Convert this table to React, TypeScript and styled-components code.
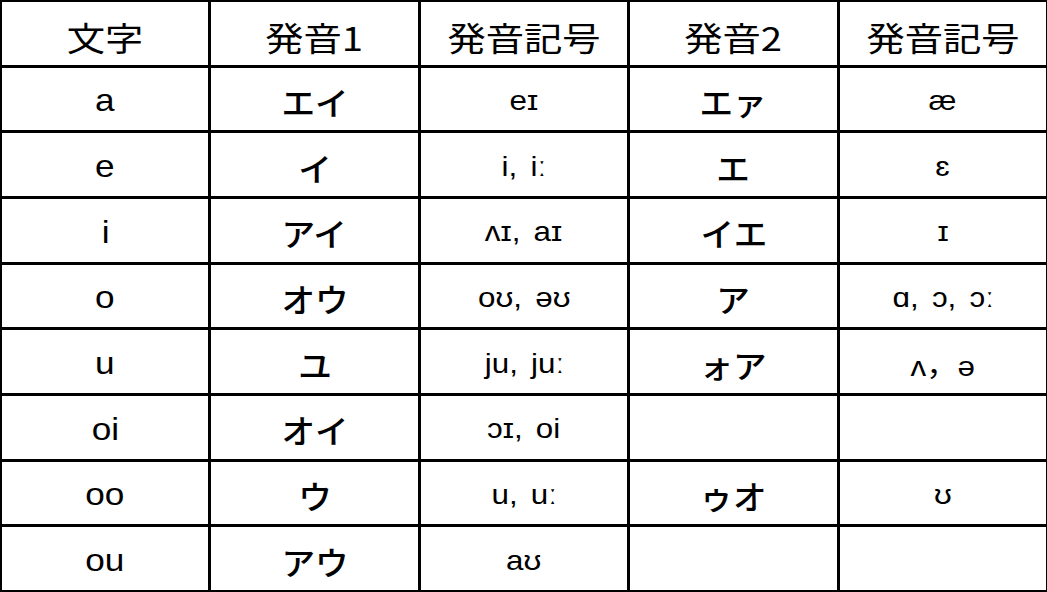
import React from "react";
import styled, { createGlobalStyle } from "styled-components";

const GlobalStyle = createGlobalStyle`
  html, body {
    margin: 0;
    padding: 0;
    background: #ffffff;
  }
`;

type Kind = "head" | "letter" | "kana" | "ipa";

type Row = [string, string, string, string, string];

const HEADERS: Row = ["文字", "発音1", "発音記号", "発音2", "発音記号"];

const ROWS: Row[] = [
  ["a", "エイ", "eɪ", "エァ", "æ"],
  ["e", "イ", "i, iː", "エ", "ɛ"],
  ["i", "アイ", "ʌɪ, aɪ", "イエ", "ɪ"],
  ["o", "オウ", "oʊ, əʊ", "ア", "ɑ, ɔ, ɔː"],
  ["u", "ユ", "ju, juː", "ォア", "ʌ，ə"],
  ["oi", "オイ", "ɔɪ, oi", "", ""],
  ["oo", "ウ", "u, uː", "ゥオ", "ʊ"],
  ["ou", "アウ", "aʊ", "", ""],
];

const COLUMN_KINDS: Kind[] = ["letter", "kana", "ipa", "kana", "ipa"];

const SIZES: Record<Kind, { size: string; stretch: number; top: string }> = {
  head: { size: "33px", stretch: 1.16, top: "8px" },
  letter: { size: "32px", stretch: 1.1, top: "4px" },
  kana: { size: "32px", stretch: 1.05, top: "4px" },
  ipa: { size: "28px", stretch: 1.12, top: "4px" },
};

const Table = styled.div`
  box-sizing: border-box;
  width: 1047px;
  height: 592px;
  padding: 2px 1px 2px 2px;
  background: #000000;
  display: grid;
  grid-template-columns: repeat(5, 1fr);
  grid-template-rows: repeat(9, 1fr);
  gap: 3px;
`;

const Cell = styled.div<{ $kind: Kind }>`
  background: #ffffff;
  display: flex;
  align-items: center;
  justify-content: center;
  color: #000000;
  white-space: nowrap;
  font-family: ${({ $kind }) =>
    $kind === "ipa"
      ? `"Liberation Sans", "DejaVu Sans", "Noto Sans CJK JP", sans-serif`
      : $kind === "letter"
        ? `"Liberation Sans", Arial, sans-serif`
        : `"Noto Sans CJK JP", sans-serif`};
  font-size: ${({ $kind }) => SIZES[$kind].size};
  font-weight: ${({ $kind }) => ($kind === "kana" ? 500 : 400)};
  word-spacing: ${({ $kind }) => ($kind === "ipa" ? "4px" : "0")};
  padding-top: ${({ $kind }) => SIZES[$kind].top};
`;

const Glyphs = styled.span<{ $kind: Kind }>`
  display: inline-block;
  transform: scaleX(${({ $kind }) => SIZES[$kind].stretch});
`;

export default function App() {
  return (
    <>
      <GlobalStyle />
      <Table>
        {HEADERS.map((text, i) => (
          <Cell key={`h${i}`} $kind="head">
            <Glyphs $kind="head">{text}</Glyphs>
          </Cell>
        ))}
        {ROWS.map((row, r) =>
          row.map((text, c) => (
            <Cell key={`${r}-${c}`} $kind={COLUMN_KINDS[c]}>
              <Glyphs $kind={COLUMN_KINDS[c]}>{text}</Glyphs>
            </Cell>
          )),
        )}
      </Table>
    </>
  );
}
